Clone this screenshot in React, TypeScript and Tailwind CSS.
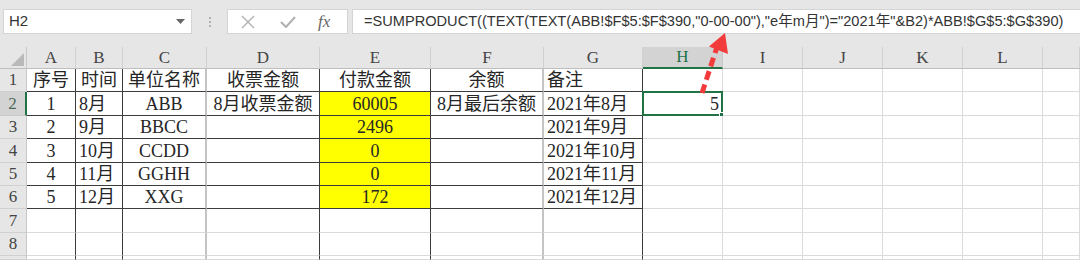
import React from 'react';

const cols = ['A', 'B', 'C', 'D', 'E', 'F', 'G', 'H', 'I', 'J', 'K', 'L', 'M'];

type Align = 'l' | 'c' | 'r';

// column alignment for the table body
const align: Record<string, Align> = {
  A: 'c', B: 'l', C: 'c', D: 'c', E: 'c', F: 'c', G: 'l', H: 'r',
};

const rows: string[][] = [
  ['序号', '时间', '单位名称', '收票金额', '付款金额', '余额', '备注'],
  ['1', '8月', 'ABB', '8月收票金额', '60005', '8月最后余额', '2021年8月', '5'],
  ['2', '9月', 'BBCC', '', '2496', '', '2021年9月'],
  ['3', '10月', 'CCDD', '', '0', '', '2021年10月'],
  ['4', '11月', 'GGHH', '', '0', '', '2021年11月'],
  ['5', '12月', 'XXG', '', '172', '', '2021年12月'],
  [],
  [],
  [],
];

const tableCols = ['A', 'B', 'C', 'D', 'E', 'F', 'G'];

const Cell: React.FC<{ r: number; c: string; text?: string }> = ({ r, c, text }) => {
  const inTable = tableCols.includes(c);
  const right = !inTable
    ? 'border-r border-r-[#dadada]'
    : c === 'C' || c === 'F'
      ? 'border-r-2 border-r-[#c4c4c4]'
      : 'border-r border-r-[#3c3c3c]';
  const bottom = inTable && r <= 6 ? 'border-b border-b-[#3c3c3c]' : 'border-b border-b-[#dadada]';
  const yellow = c === 'E' && r >= 2 && r <= 6 ? 'bg-[#ffff00]' : 'bg-white';
  let a: Align = align[c] ?? 'l';
  if (r === 1 && c !== 'G') a = 'c';
  const just = a === 'c' ? 'justify-center' : a === 'r' ? 'justify-end pr-[3px]' : 'justify-start pl-[3px]';
  const selected = r === 2 && c === 'H';

  return (
    <div className={`relative flex items-center overflow-visible whitespace-nowrap text-[18px] leading-none text-[#262626] ${right} ${bottom} ${yellow} ${just}`}>
      {text}
      {selected && (
        <div className="absolute -left-[1px] -top-[1px] -right-[1px] -bottom-[1px] border-2 border-[#217346]">
          <div className="absolute -right-[4px] -bottom-[4px] w-[6px] h-[6px] bg-[#217346] border border-white" />
        </div>
      )}
    </div>
  );
};

const App: React.FC = () => {
  return (
    <div className="relative w-[1080px] h-[260px] overflow-hidden bg-[#e6e6e6] font-['Liberation_Serif','Noto_Sans_CJK_SC',serif]">
      {/* formula bar */}
      <div className="flex items-start h-[47px] pt-[9px] font-['Liberation_Sans','Noto_Sans_CJK_SC',sans-serif]">
        <div className="ml-[3px] w-[189px] h-[25px] bg-white border border-[#d4d4d4] flex items-center justify-between px-[5px]">
          <span className="text-[15px] text-[#333]">H2</span>
          <svg width="9" height="5" viewBox="0 0 9 5" className="mr-[1px]">
            <path d="M0 0 L9 0 L4.5 5 Z" fill="#666" />
          </svg>
        </div>
        <div className="w-[35px] h-[25px] flex flex-col items-center justify-center gap-[2px]">
          <div className="w-[2px] h-[2px] bg-[#b0b0b0]" />
          <div className="w-[2px] h-[2px] bg-[#b0b0b0]" />
          <div className="w-[2px] h-[2px] bg-[#b0b0b0]" />
        </div>
        <div className="w-[121px] h-[25px] bg-white border border-[#d4d4d4] flex items-center">
          <svg width="14" height="14" viewBox="0 0 14 14" className="ml-[13px]">
            <path d="M1 1 L13 13 M13 1 L1 13" stroke="#b0b0b0" strokeWidth="1.4" fill="none" />
          </svg>
          <svg width="16" height="12" viewBox="0 0 16 12" className="ml-[25px]">
            <path d="M1 6 L6 11 L15 1" stroke="#b0b0b0" strokeWidth="2" fill="none" />
          </svg>
          <span className="ml-[22px] text-[17px] italic text-[#666] font-['Liberation_Serif',serif]">fx</span>
        </div>
        <div className="ml-[4px] flex-1 h-[25px] bg-white border border-[#d4d4d4] border-r-0 flex items-center pl-[11px]">
          <span className="text-[14.6px] text-[#333] whitespace-nowrap">
            =SUMPRODUCT((TEXT(TEXT(ABB!$F$5:$F$390,"0-00-00"),"e年m月")="2021年"&amp;B2)*ABB!$G$5:$G$390)
          </span>
        </div>
      </div>

      {/* sheet */}
      <div className="grid grid-cols-[27px_49px_47px_84px_113px_111px_113px_99px_80px_80px_80px_80px_80px_37px] grid-rows-[22px_23px_24px_23px_24px_23px_23px_24px_23px_4px] bg-white">
        {/* corner */}
        <div className="relative bg-[#e6e6e6] border-r border-r-[#c8c8c8] border-b border-b-[#bdbdbd]">
          <svg width="13" height="13" viewBox="0 0 13 13" className="absolute right-[2px] bottom-[2px]">
            <path d="M13 0 L13 13 L0 13 Z" fill="#b9b9b9" />
          </svg>
        </div>
        {cols.map((c) =>
          c === 'H' ? (
            <div key={c} className="flex items-center justify-center bg-[#d3d3d3] text-[17px] text-[#217346] border-r border-r-[#c8c8c8] border-b-2 border-b-[#217346]">
              {c}
            </div>
          ) : (
            <div key={c} className="flex items-center justify-center bg-[#e6e6e6] text-[17px] text-[#444] border-r border-r-[#d0d0d0] border-b border-b-[#bdbdbd]">
              {/* column M is mostly off screen, its letter is not visible */}
              {c === 'M' ? '' : c}
            </div>
          )
        )}
        {rows.map((row, i) => {
          const r = i + 1;
          return (
            <React.Fragment key={r}>
              {r === 2 ? (
                <div className="flex items-center justify-center bg-[#d3d3d3] text-[17px] text-[#4a6b58] border-r-2 border-r-[#217346] border-b border-b-[#c8c8c8]">
                  {r}
                </div>
              ) : (
                <div className="flex items-center justify-center bg-[#e6e6e6] text-[17px] text-[#444] border-r border-r-[#c8c8c8] border-b border-b-[#d0d0d0]">
                  {r < 9 ? r : ''}
                </div>
              )}
              {cols.map((c, j) => (
                <Cell key={c} r={r} c={c} text={row[j]} />
              ))}
            </React.Fragment>
          );
        })}
      </div>

      {/* annotation arrow */}
      <svg width="1080" height="260" className="absolute left-0 top-0 pointer-events-none">
        <line x1="702" y1="93" x2="717" y2="47" stroke="#f23c3c" strokeWidth="5" strokeDasharray="9 5" />
        <path d="M725 33 L728 54 L709 46.5 Z" fill="#f23c3c" />
      </svg>
    </div>
  );
};

export default App;
